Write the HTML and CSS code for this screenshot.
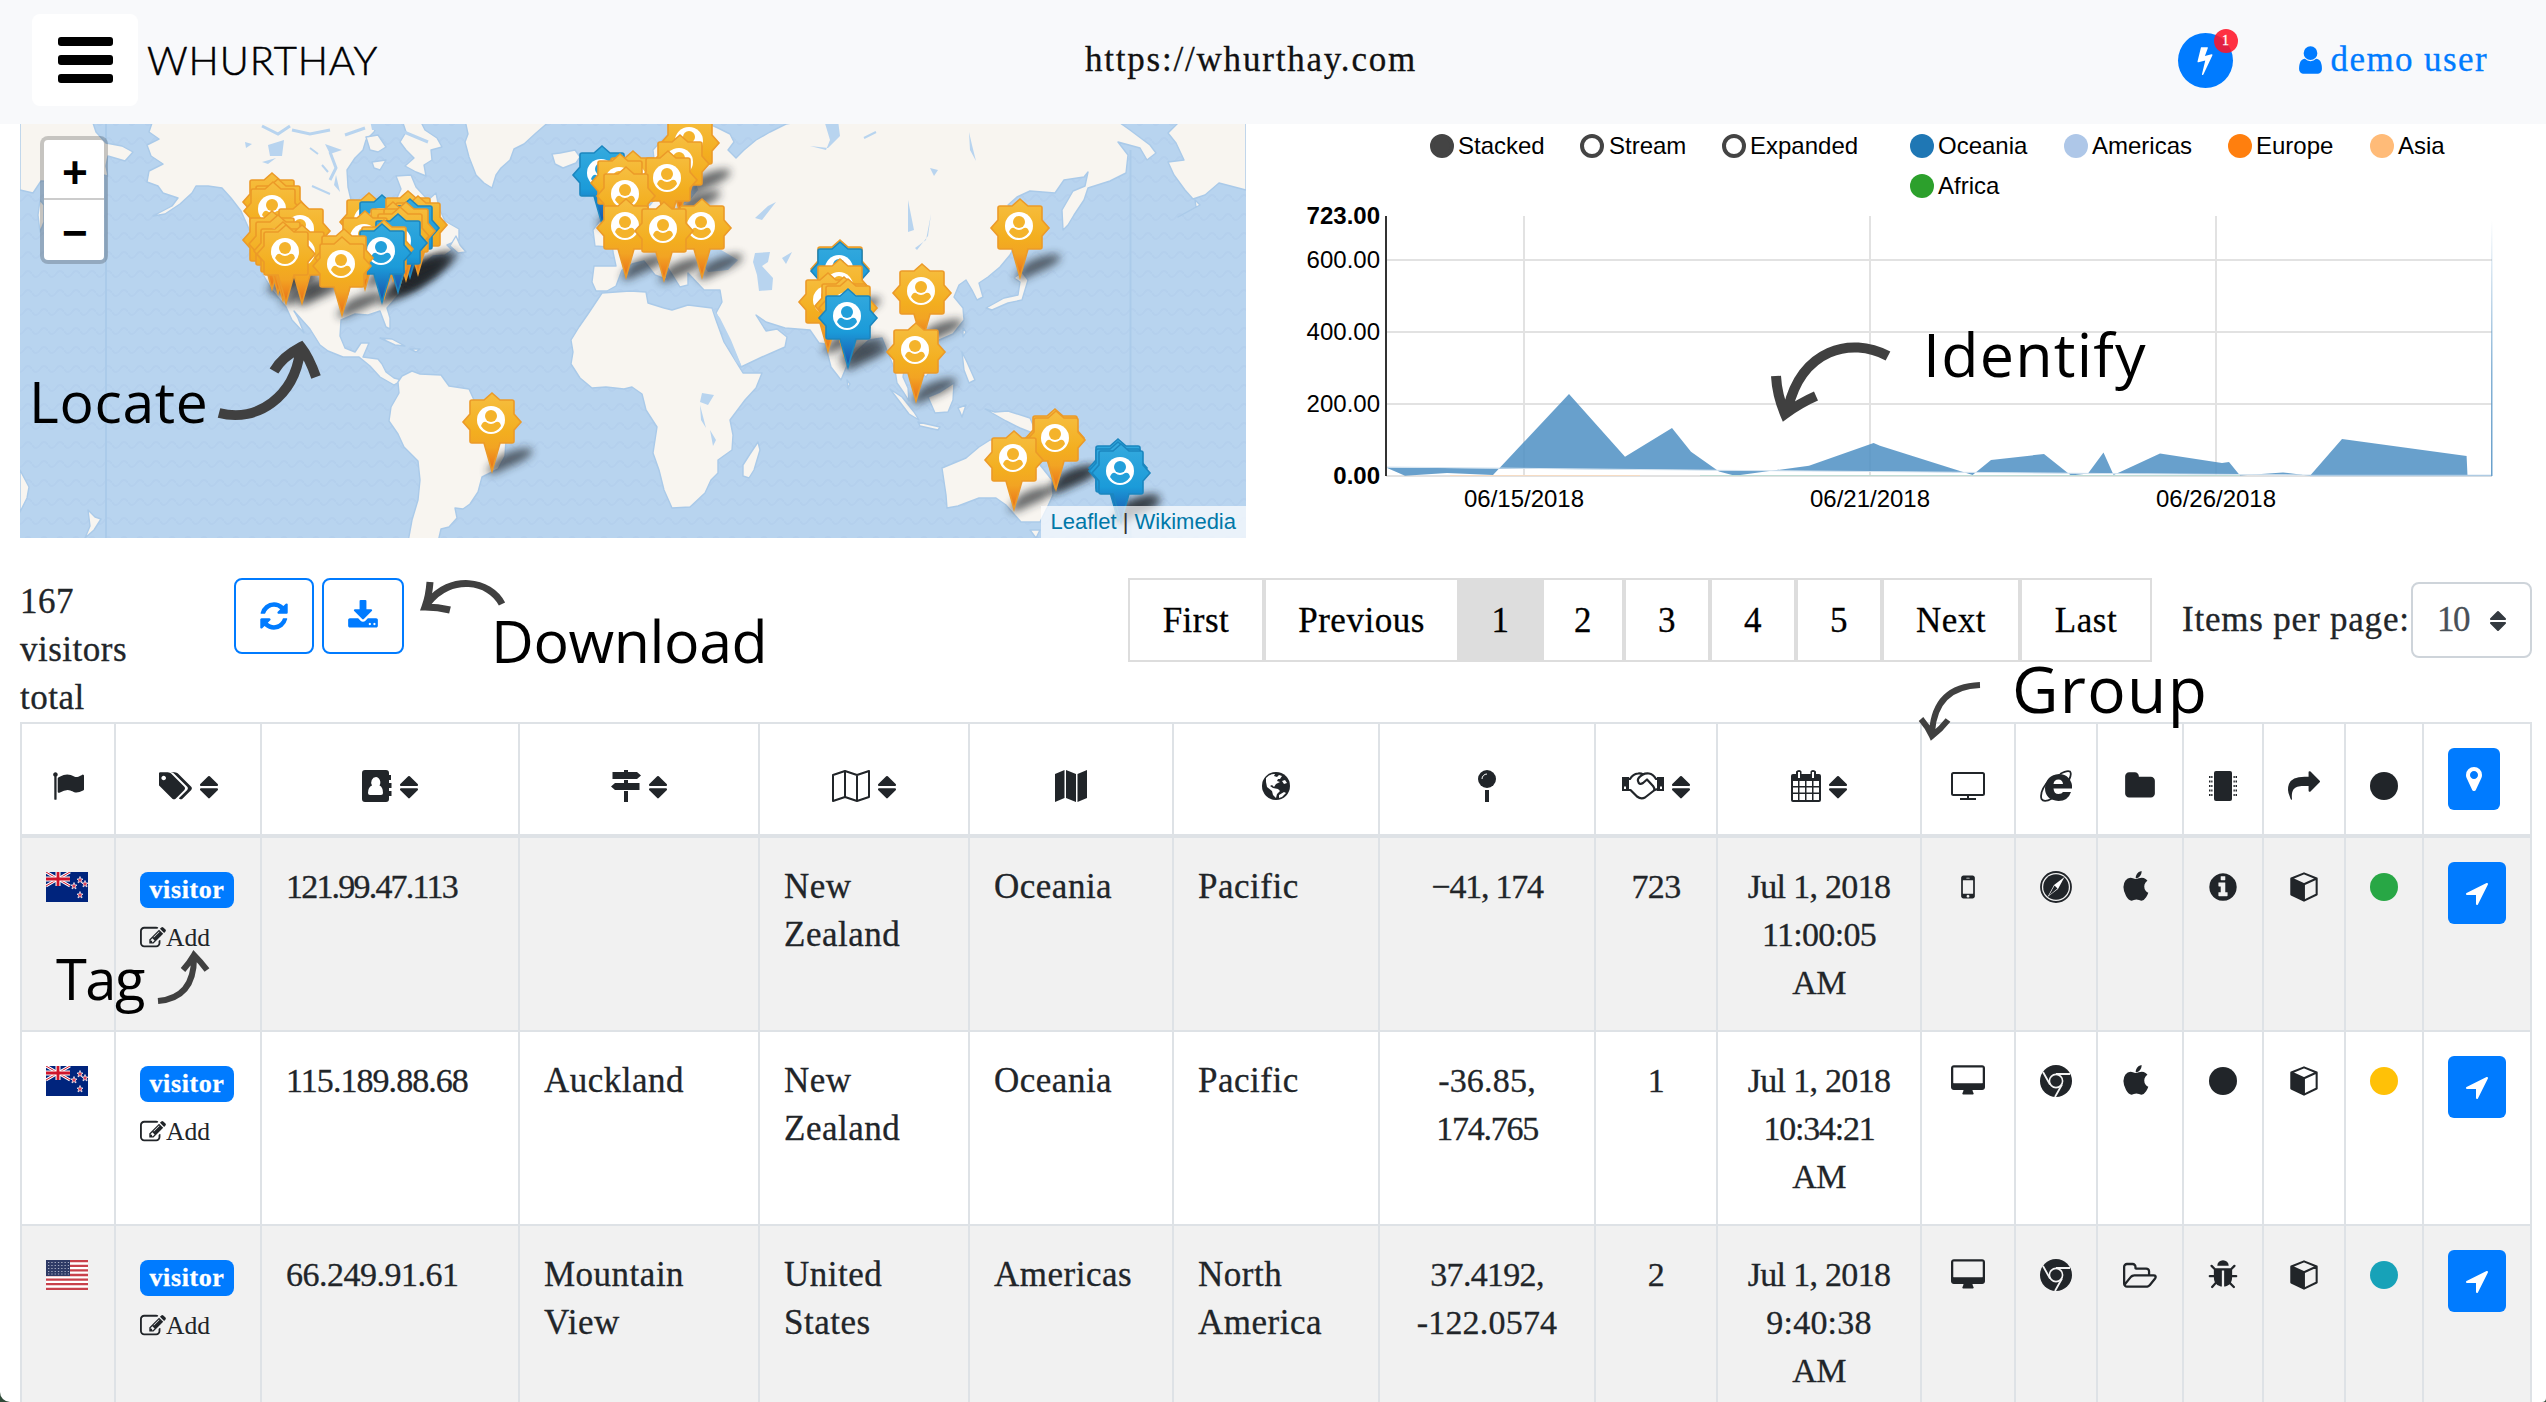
FILE: index.html
```html
<!DOCTYPE html>
<html lang="en">
<head>
<meta charset="utf-8">
<title>Whurthay</title>
<link rel="stylesheet" href="styles.css">
</head>
<body>
<svg class="defs" aria-hidden="true">
  <defs>
    <linearGradient id="gOrange" x1="0" y1="0" x2="0" y2="1"><stop offset="0" stop-color="#f6bf41"/><stop offset=".5" stop-color="#f3ae1f"/><stop offset=".7" stop-color="#f2a423"/><stop offset="1" stop-color="#ea6d17"/></linearGradient>
    <linearGradient id="gBlue" x1="0" y1="0" x2="0" y2="1"><stop offset="0" stop-color="#35aade"/><stop offset=".55" stop-color="#1b9bd9"/><stop offset="1" stop-color="#1a4ea8"/></linearGradient>
    <linearGradient id="gEdge" x1="0" y1="0" x2="0" y2="1"><stop offset="0" stop-color="#679fcb" stop-opacity="0"/><stop offset=".6" stop-color="#679fcb" stop-opacity=".8"/><stop offset="1" stop-color="#679fcb"/></linearGradient>
    <filter id="soft" x="-30%" y="-60%" width="160%" height="220%"><feGaussianBlur stdDeviation="4"/></filter>
    <pattern id="waves" width="16" height="19" patternUnits="userSpaceOnUse"><path d="M0 8Q4 14 8 8T16 8" fill="none" stroke="#b4d0ed" stroke-width="2"/></pattern>
    <path id="pinShape" d="M0-78L8-71H20Q22-71 22-69V-57L29-49L22-41V-30Q22-28 20-28H8L0 0L-8-28H-20Q-22-28-22-30V-41L-29-49L-22-57V-69Q-22-71-20-71H-8Z"/>
    <g id="face"><circle cx="-1" cy="-51" r="14" fill="#fff"/><circle cx="-1" cy="-55" r="6" fill="currentColor"/><path d="M-11-45Q-9-50-6-49Q-1-45 4-49Q8-50 9-45Q5-39-1-39T-11-45Z" fill="currentColor"/></g>
    <g id="o"><use href="#pinShape" fill="url(#gOrange)" stroke="#ec9a28" stroke-width="1.6"/><use href="#face" color="#f4b32b"/></g>
    <g id="b"><use href="#pinShape" fill="url(#gBlue)" stroke="#1b86bf" stroke-width="1.6"/><use href="#face" color="#229fda"/></g>
    <path id="sh" d="M-6 1L4-12Q16-22 38-23Q46-18 26-8Q10-1 2 3Z" filter="url(#soft)" opacity=".68"/>
  </defs>
  <symbol id="bolt" viewBox="0 0 1792 1792"><path d="M1333 566q18 20 7 44l-540 1157q-13 25-42 25-4 0-14-2-17-5-25.500-19t-4.500-30l197-808-406 101q-4 1-12 1-18 0-31-11-18-15-13-39l201-825q4-14 16-23t28-9h328q19 0 32 12.500t13 29.500q0 8-5 18l-171 463 396-98q8-2 12-2 19 0 34 15z"/></symbol>
  <symbol id="user" viewBox="256 0 1280 1792"><path d="M1536 1399q0 109-62.500 187t-150.500 78h-854q-88 0-150.500-78t-62.500-187q0-85 8.500-160.500t31.500-152 58.500-131 94-89 134.500-34.500q131 128 313 128t313-128q76 0 134.500 34.500t94 89 58.500 131 31.500 152 8.500 160.500zm-256-887q0 159-112.500 271.500t-271.500 112.500-271.500-112.500-112.500-271.500 112.500-271.500 271.500-112.500 271.500 112.500 112.500 271.500z"/></symbol>
  <symbol id="refresh" viewBox="0 0 1792 1792"><path d="M1639 1056q0 5-1 7-64 268-268 434.500t-478 166.500q-146 0-282.500-55t-243.500-157l-129 129q-19 19-45 19t-45-19-19-45v-448q0-26 19-45t45-19h448q26 0 45 19t19 45-19 45l-137 137q71 66 161 102t187 36q134 0 250-65t186-179q11-17 53-117 8-23 30-23h192q13 0 22.500 9.500t9.500 22.500zm25-800v448q0 26-19 45t-45 19h-448q-26 0-45-19t-19-45 19-45l138-138q-148-137-349-137-134 0-250 65t-186 179q-11 17-53 117-8 23-30 23h-199q-13 0-22.500-9.500t-9.500-22.500v-7q65-268 270-434.500t480-166.500q146 0 284 55.500t245 156.500l130-129q19-19 45-19t45 19 19 45z"/></symbol>
  <symbol id="download" viewBox="0 0 1792 1792"><path d="M1344 1344q0-26-19-45t-45-19-45 19-19 45 19 45 45 19 45-19 19-45zm256 0q0-26-19-45t-45-19-45 19-19 45 19 45 45 19 45-19 19-45zm128-224v320q0 40-28 68t-68 28h-1472q-40 0-68-28t-28-68v-320q0-40 28-68t68-28h465l135 136q58 56 136 56t136-56l136-136h464q40 0 68 28t28 68zm-325-569q17 41-14 70l-448 448q-18 19-45 19t-45-19l-448-448q-31-29-14-70 17-39 59-39h256v-448q0-26 19-45t45-19h256q26 0 45 19t19 45v448h256q42 0 59 39z"/></symbol>
  <symbol id="flag" viewBox="0 0 1792 1792"><path d="M320 256q0 72-64 110v1266q0 13-9.500 22.500t-22.500 9.500h-64q-13 0-22.500-9.500t-9.500-22.500v-1266q-64-38-64-110 0-53 37.500-90.500t90.500-37.500 90.500 37.500 37.500 90.500zm1472 64v763q0 25-12.500 38.500t-39.500 27.500q-215 116-369 116-61 0-123.500-22t-108.500-48-115.500-48-142.500-22q-192 0-464 146-17 9-33 9-26 0-45-19t-19-45v-742q0-32 31-55 21-14 79-43 236-120 421-120 107 0 200 29t219 88q38 19 88 19 54 0 117.500-21t110-47 88-47 54.500-21q26 0 45 19t19 45z"/></symbol>
  <symbol id="tags" viewBox="0 0 1835 1792"><path fill-rule="evenodd" d="M384 448q0-53-37.500-90.500t-90.500-37.500-90.500 37.500-37.500 90.500 37.500 90.500 90.500 37.500 90.500-37.500 37.500-90.500zm1067 576q0 53-37 90l-491 492q-39 37-91 37-53 0-90-37l-715-716q-38-37-64.500-101t-26.500-117v-416q0-52 38-90t90-38h416q53 0 117 26.500t102 64.500l715 714q37 39 37 91zm384 0q0 53-37 90l-491 492q-39 37-91 37-36 0-59-14t-53-45l470-470q37-37 37-90 0-52-37-91l-715-714q-38-38-102-64.500t-117-26.500h224q53 0 117 26.500t102 64.500l715 714q37 39 37 91z"/></symbol>
  <symbol id="sort" viewBox="384 0 1024 1792"><path d="M1408 1088q0 26-19 45l-448 448q-19 19-45 19t-45-19l-448-448q-19-19-19-45t19-45 45-19h896q26 0 45 19t19 45zm0-256q0 26-19 45t-45 19h-896q-26 0-45-19t-19-45 19-45l448-448q19-19 45-19t45 19l448 448q19 19 19 45z"/></symbol>
  <symbol id="book" viewBox="0 0 30 32"><path fill-rule="evenodd" d="M3 0H24Q27 0 27 3V5H29V10H27V13H29.500V18H27V21H29.500V26H27V29Q27 32 24 32H3Q0 32 0 29V3Q0 0 3 0ZM14 7A5 5.500 0 0 0 10 15.500Q6 17 6 23Q6 25 8 25H19Q21 25 21 23Q21 17 17.500 15.500A5 5.500 0 0 0 14 7Z"/></symbol>
  <symbol id="signs" viewBox="0 0 30 32"><path d="M13 0H17V2H26L30 5.500L26 9H1.500V2H13ZM13 10H17V13H28.500V20H4L0 16.500L4 13H13ZM13 21H17V32H13Z"/></symbol>
  <symbol id="mapo" viewBox="0 0 38 32"><path d="M1 5L13 1L25 5L37 1V27L25 31L13 27L1 31ZM13 1V27M25 5V31" fill="none" stroke="currentColor" stroke-width="2" stroke-linejoin="round"/></symbol>
  <symbol id="map" viewBox="0 0 32 32"><path d="M0 4L9.500 0V28L0 32ZM11 0L21 4V32L11 28ZM22.500 4L32 0V28L22.500 32Z"/></symbol>
  <symbol id="globe" viewBox="0 0 28 28"><circle cx="14" cy="14" r="14"/><path fill="#fff" d="M4 6Q8 1.500 13 2L12 4L15 5L17 3L20 4L18 7L16 7L15 9L18 10L14 12L12 15L10 13L8 14L11 16L16 17L18 19L15 22L14 26L11 23L10 19L5 15L4 10ZM17 23L22 20L24 21L20 25L17 26ZM20 9L23 8L25 11L22 12Z"/></symbol>
  <symbol id="pin" viewBox="0 0 18 32"><circle cx="9" cy="9" r="9"/><path d="M7 20H11V32H7Z"/><path d="M4 9A5 5 0 0 1 9 4" fill="none" stroke="#fff" stroke-width="1"/></symbol>
  <symbol id="shake" viewBox="0 0 42 28"><path d="M6 18H8.500L15 24.500Q19 27.500 23 25.500L32 18.500Q34 17 36 17.500M6 7H8Q11 2 16 1.500Q19 1 21 2.500Q23 1.200 27 1.500Q31 2 34 7H36M21 2.500Q15 6 16 9Q17 13.500 21 11L25 7.500L31 14Q33 16.500 32 18.500" fill="none" stroke="currentColor" stroke-width="2.200" stroke-linejoin="round"/><path fill-rule="evenodd" d="M0 5H7V19H0ZM2 14.500V17H4V14.500ZM35 5H42V19H35ZM38 14.500V17H40V14.500Z"/></symbol>
  <symbol id="cal" viewBox="0 0 30 32"><path fill-rule="evenodd" d="M2 4H5V1.500Q6 0 8 0T10.500 1.500V4H19.500V1.500Q20 0 22 0T25 1.500V4H28Q30 4 30 6V30Q30 32 28 32H2Q0 32 0 30V6Q0 4 2 4ZM2 11V16H7V11ZM8.500 11V16H14V11ZM15.500 11V16H21V11ZM22.500 11V16H28V11ZM2 17.500V22.500H7V17.500ZM8.500 17.500V22.500H14V17.500ZM15.500 17.500V22.500H21V17.500ZM22.500 17.500V22.500H28V17.500ZM2 24V30H7V24ZM8.500 24V30H14V24ZM15.500 24V30H21V24ZM22.500 24V30H28V24Z"/><path d="M8 2V8M22 2V8" stroke="#fff" stroke-width="2"/></symbol>
  <symbol id="tv" viewBox="0 0 34 28"><rect x="1" y="1" width="32" height="22" rx="1.500" fill="none" stroke="currentColor" stroke-width="2"/><path d="M16 23H18V26H25V28H9V26H16Z"/></symbol>
  <symbol id="ie" viewBox="0 0 32 32"><path d="M19 4A13 13 0 0 1 32 18.500H13.500Q14 24 18.500 24Q22 24 23 22H31Q28 31 18.500 31Q5 30 5 18Q6 5 19 4ZM13.500 14H23Q22.500 9.500 18.500 9.500Q14 9.500 13.500 14Z" fill-rule="evenodd"/><path d="M20 4Q27 0 30 1.500Q32 4 29 10M10 9Q-1 21 1.500 29Q4 33 12 28.500" fill="none" stroke="currentColor" stroke-width="1.800"/></symbol>
  <symbol id="folder" viewBox="0 0 1792 1792"><path d="M1728 608v704q0 92-66 158t-158 66h-1216q-92 0-158-66t-66-158v-960q0-92 66-158t158-66h320q92 0 158 66t66 158v32h672q92 0 158 66t66 158z"/></symbol>
  <symbol id="chip" viewBox="0 0 28 32"><rect x="5" y="1" width="18" height="30" rx="2"/><path d="M0 7H28M0 11.500H28M0 16H28M0 20.500H28M0 25H28" stroke="currentColor" stroke-width="2" stroke-dasharray="1.500 .700 1.300 21 1.300 .700 1.500"/></symbol>
  <symbol id="share" viewBox="0 0 1792 1792"><path d="M1792 640q0 26-19 45l-512 512q-19 19-45 19t-45-19-19-45v-256h-224q-98 0-175.500 6t-154 21.500-133 42.500-105.500 69.500-80 101-48.500 138.500-17.500 181q0 55 5 123 0 6 2.500 23.500t2.500 26.500q0 15-8.500 25t-23.500 10q-16 0-28-17-7-9-13-22t-13.500-30-10.500-24q-127-285-127-451 0-199 53-333 162-403 875-403h224v-256q0-26 19-45t45-19 45 19l512 512q19 19 19 45z"/></symbol>
  <symbol id="dot" viewBox="0 0 28 28"><circle cx="14" cy="14" r="14"/></symbol>
  <symbol id="marker" viewBox="0 0 1792 1792"><path fill-rule="evenodd" d="M1152 640q0-106-75-181t-181-75-181 75-75 181 75 181 181 75 181-75 75-181zm256 0q0 109-33 179l-364 774q-16 33-47.500 52t-67.500 19-67.500-19-46.500-52l-365-774q-33-70-33-179 0-212 150-362t362-150 362 150 150 362z"/></symbol>
  <symbol id="arrow" viewBox="0 0 1792 1792"><path d="M1593 349l-640 1280q-17 35-57 35-5 0-15-2-22-5-35.500-22.500t-13.500-39.500v-576h-576q-22 0-39.500-13.500t-22.500-35.500 4-42 29-30l1280-640q13-7 29-7 27 0 45 19 15 14 18.500 34.500t-6.500 39.500z"/></symbol>
  <symbol id="mobile" viewBox="512 0 768 1792"><path fill-rule="evenodd" d="M976 1408q0-33-23.500-56.500t-56.500-23.500-56.500 23.500-23.500 56.500 23.500 56.500 56.500 23.500 56.500-23.500 23.500-56.500zm208-160v-704q0-13-9.500-22.500t-22.500-9.500h-512q-13 0-22.500 9.500t-9.500 22.500v704q0 13 9.500 22.500t22.500 9.500h512q13 0 22.500-9.500t9.500-22.500zm-192-848q0-16-16-16h-160q-16 0-16 16t16 16h160q16 0 16-16zm288-16v1024q0 52-38 90t-90 38h-512q-52 0-90-38t-38-90v-1024q0-52 38-90t90-38h512q52 0 90 38t38 90z"/></symbol>
  <symbol id="safari" viewBox="0 0 32 32"><circle cx="16" cy="16" r="15" fill="none" stroke="currentColor" stroke-width="1.800"/><circle cx="16" cy="16" r="12.800"/><path d="M24.500 6L18 18L7.500 26L14 14Z" fill="#fff"/><path d="M14.500 14.500L17.500 17.500L9 24.500Z" fill="#212529"/></symbol>
  <symbol id="apple" viewBox="0 0 1792 1792"><path d="M1585 1215q-39 125-123 250-129 196-257 196-49 0-140-32-86-32-151-32-61 0-142 33-81 34-132 34-152 0-301-259-147-261-147-503 0-228 113-374 113-144 284-144 72 0 177 30 104 30 138 30 45 0 143-34 102-34 173-34 119 0 213 65 52 36 104 100-79 67-114 118-65 94-65 207 0 124 69 223t158 126zm-376-1173q0 61-29 136-30 75-93 138-54 54-108 72-37 11-104 17 3-149 78-257 74-107 250-148 1 3 2.500 11t2.500 11q0 4 .500 10t.500 10z"/></symbol>
  <symbol id="info" viewBox="0 0 1792 1792"><path fill-rule="evenodd" d="M1152 1376v-160q0-14-9-23t-23-9h-96v-512q0-14-9-23t-23-9h-320q-14 0-23 9t-9 23v160q0 14 9 23t23 9h96v320h-96q-14 0-23 9t-9 23v160q0 14 9 23t23 9h448q14 0 23-9t9-23zm-128-896v-160q0-14-9-23t-23-9h-192q-14 0-23 9t-9 23v160q0 14 9 23t23 9h192q14 0 23-9t9-23zm640 416q0 209-103 385.500t-279.500 279.500-385.500 103-385.500-103-279.500-279.500-103-385.500 103-385.500 279.500-279.500 385.500-103 385.500 103 279.500 279.500 103 385.500z"/></symbol>
  <symbol id="cube" viewBox="0 0 30 32"><path d="M15 1.500L28.500 7V24L15 30.500L1.500 24V7ZM1.500 7L15 13L28.500 7" fill="none" stroke="currentColor" stroke-width="2.200" stroke-linejoin="round"/><path d="M1 7L16 13V31L1 24Z"/></symbol>
  <symbol id="desktop" viewBox="-64 0 1920 1792"><path fill-rule="evenodd" d="M1728 992v-832q0-13-9.500-22.500t-22.500-9.500h-1600q-13 0-22.500 9.500t-9.500 22.500v832q0 13 9.500 22.500t22.500 9.500h1600q13 0 22.500-9.500t9.500-22.500zm128-832v1088q0 66-47 113t-113 47h-544q0 37 16 77.500t32 71 16 43.500q0 26-19 45t-45 19h-512q-26 0-45-19t-19-45q0-14 16-44t32-70 16-78h-544q-66 0-113-47t-47-113v-1088q0-66 47-113t113-47h1600q66 0 113 47t47 113z"/></symbol>
  <symbol id="chrome" viewBox="0 0 32 32"><circle cx="16" cy="16" r="16"/><circle cx="16" cy="16" r="6.600" fill="none" stroke="#f4f4f4" stroke-width="1.600"/><path d="M16 9H30M22 19.500L15 32M10 19.500L3 7" fill="none" stroke="#f4f4f4" stroke-width="1.800"/></symbol>
  <symbol id="open" viewBox="0 0 1920 1792"><path fill-rule="evenodd" d="M1781 1013q0-31-53-31h-1088q-40 0-85.500 21.500t-71.500 52.500l-294 363q-18 24-18 40 0 31 53 31h1088q40 0 86-22t71-53l294-363q18-22 18-39zm-1141-159h768v-160q0-40-28-68t-68-28h-576q-40 0-68-28t-28-68v-64q0-40-28-68t-68-28h-320q-40 0-68 28t-28 68v853l256-315q44-53 116-87.500t140-34.500zm1269 159q0 62-46 120l-295 363q-43 53-116 87.500t-140 34.500h-1088q-92 0-158-66t-66-158v-960q0-92 66-158t158-66h320q92 0 158 66t66 158v32h544q92 0 158 66t66 158v160h192q54 0 99 24.500t67 70.500q15 32 15 68z"/></symbol>
  <symbol id="bug" viewBox="0 0 1792 1792"><path d="M1696 960q0 26-19 45t-45 19h-224q0 171-67 290l208 209q19 19 19 45t-19 45q-18 19-45 19t-45-19l-198-197q-5 5-15 13t-42 28.500-65 36.500-82 29-97 13v-896h-128v896q-51 0-101.500-13.500t-87-33-66-39-43.500-32.500l-15-14-183 207q-20 21-48 21-24 0-43-16-19-18-20.500-44.500t15.500-46.500l202-227q-58-114-58-274h-224q-26 0-45-19t-19-45 19-45 45-19h224v-294l-173-173q-19-19-19-45t19-45 45-19 45 19l173 173h844l173-173q19-19 45-19t45 19 19 45-19 45l-173 173v294h224q26 0 45 19t19 45zm-480-576h-640q0-133 93.500-226.500t226.500-93.500 226.500 93.500 93.500 226.500z"/></symbol>
  <symbol id="edit" viewBox="0 0 1792 1792"><path fill-rule="evenodd" d="M888 1184l116-116-152-152-116 116v56h96v96h56zm440-720q-16-16-33 1l-350 350q-17 17-1 33t33-1l350-350q17-17 1-33zm80 594v190q0 119-84.500 203.500t-203.500 84.500h-832q-119 0-203.500-84.500t-84.500-203.500v-832q0-119 84.500-203.500t203.500-84.500h832q63 0 117 25 15 7 18 23 3 17-9 29l-49 49q-14 14-32 8-23-6-45-6h-832q-66 0-113 47t-47 113v832q0 66 47 113t113 47h832q66 0 113-47t47-113v-126q0-13 9-22l64-64q15-15 35-7t20 29zm-96-738l288 288-672 672h-288v-288zm444 132l-92 92-288-288 92-92q28-28 68-28t68 28l152 152q28 28 28 68t-28 68z"/></symbol>
  <symbol id="nz" viewBox="0 0 42 30"><path fill="#00247d" d="M0 0H42V30H0Z"/><path d="M0 0L24 14M24 0L0 14" stroke="#fff" stroke-width="3"/><path d="M0 0L24 14M24 0L0 14" stroke="#cf142b" stroke-width="1"/><path d="M12 0V14M0 7H24" stroke="#fff" stroke-width="5"/><path d="M12 0V14M0 7H24" stroke="#cf142b" stroke-width="2.800"/><g fill="#d8445a" stroke="#fff" stroke-width=".700"><path id="st" d="M34 4.500L35 7H37L35.500 8.500L36 11L34 9.500L32 11L32.500 8.500L31 7H33Z"/><use href="#st" x="-6" y="6"/><use href="#st" x="5" y="4"/><use href="#st" y="15"/></g></symbol>
  <symbol id="us" viewBox="0 0 42 30"><path fill="#fff" d="M0 0H42V30H0Z"/><path d="M0 1.200H42M0 5.800H42M0 10.400H42M0 15H42M0 19.600H42M0 24.200H42M0 28.800H42" stroke="#c8414b" stroke-width="2.300"/><path fill="#2f3b66" d="M0 0H24V16H0Z"/><path d="M2 2.500H23M2 5.500H23M2 8.500H23M2 11.500H23M2 14H23" stroke="#a9aec4" stroke-width="1.200" stroke-dasharray="1.300 2"/></symbol>
</svg>

<div class="app">
  <header class="top">
    <div class="brand">
      <button class="menu" aria-label="Menu"><i></i><i></i><i></i></button>
      <span class="logo">WHURTHAY</span>
    </div>
    <div class="site">https://whurthay.com</div>
    <div class="account">
      <div class="alert"><svg width="30" height="30"><use href="#bolt"/></svg><span class="count">1</span></div>
      <a class="me"><svg width="23" height="32"><use href="#user"/></svg><span>demo user</span></a>
    </div>
  </header>

  <section class="panels">
    <div class="map">
      <svg class="world" viewBox="20 124 1226 414" width="1226" height="414">
        <path fill="#b8d4ef" d="M20 124H1246V538H20Z"/><path fill="url(#waves)" d="M20 124H1246V538H20Z"/>
        <path d="M106 124V538M1130.500 150V538" stroke="#abcbea" stroke-width="2"/>
        <g fill="#f8f5f0" stroke="#aacae9" stroke-width="1.400" stroke-linejoin="round">
          <path d="M20 120H92L96 132L106 143L122 146L133 152L125 161L108 156L106 166L108 176L98 174L90 180L60 182L41 181L33 193L20 190Z"/><path d="M40 200L44 205V222L40 232L38 215Z"/>
          <path d="M153 120L149 132L159 139L147 145L151 156L163 164L149 171L147 182L158 186L163 193L178 198L172 206L153 216L165 214L180 204L192 193L196 186L208 186L222 188L231 198L241 211L249 229L256 250L261 271L272 290L286 307L292 320L304 333L298 318L294 311L310 329L320 345L328 351L343 357L359 357L370 366L380 377L394 385L402 380L394 378L386 372L382 364L378 359L363 357L369 343L361 343L355 352L345 348L340 336L341 320L355 314L368 315L380 311L386 327L390 329L390 318L387 308L394 300L412 279L420 268L433 256L445 255L452 250L447 245L459 240L459 229L445 221L439 208L436 193L428 200L416 187L411 175L396 176L401 189L396 200L385 212L372 205L351 200L348 187L347 170L355 158L363 150L366 140L374 132L380 120Z"/>
          <path d="M402 120L406 132L400 142L406 150L414 158L405 166L416 172L426 176L424 165L432 160L431 150L442 147L437 138L425 130L420 120ZM372 162L386 160L380 170L374 168ZM366 137L378 135L386 147L378 152L370 150ZM450 246L456 236L460 245L466 252L458 253Z"/>
          <path d="M465 120L468 134L465 142L469 157L476 175L484 183L492 188L496 175L501 168L510 160L514 149L524 144L536 133L551 120Z"/>
          <path d="M552 154L560 153L575 150L580 157L576 163L563 168L555 164Z"/>
          <path d="M402 376L412 371L420 374L441 375L449 386L469 389L474 400L494 411L512 416L518 423L514 432L506 439L505 456L498 469L482 477L478 492L470 504L463 509L455 508L457 518L449 527L441 529L438 542H408L412 520L418 500L420 480L418 461L404 447L398 434L389 421L391 407L399 393L398 382Z"/>
          <path d="M380 338L392 339L405 346L395 345ZM410 349L420 349L416 352Z"/>
          <path d="M20 470L29 487L27 498L20 512ZM88 510L95 517L101 519L94 530L85 538L90 526Z"/>
          <path d="M602 293L588 314L579 327L571 340L573 352L571 364L580 378L592 388L606 387L624 389L632 387L642 394L646 410L657 427L653 453L659 470L664 490L672 508L690 507L705 493L711 480L718 473L718 460L732 450L733 435L730 420L745 400L756 388L762 373L743 373L735 360L724 342L716 320L712 308L688 305L672 310L664 308L648 303L646 292L630 291Z"/>
          <path d="M810 120L786 124L770 132L756 140L744 150L736 158L728 150L734 142L730 134L718 128L700 120L680 124L662 140L653 150L655 168L664 172L662 190L650 205L640 212L630 232L612 240L613 252L616 266L594 266L592 282L596 291L607 291L616 286L622 270L632 264L644 261L655 275L668 280L658 262L668 268L680 287L688 285L688 273L704 290L720 290L722 302L716 313L727 335L741 367L762 357L785 347L787 337L777 329L766 331L756 315L766 322L785 328L810 330L819 343L825 344L831 367L841 380L848 363L858 350L869 340L882 338L888 353L895 370L897 383L904 393L909 401L908 388L903 377L904 370L918 370L926 377L932 367L926 350L937 341L953 334L964 320L963 308L954 297L959 285L966 280L972 290L977 300L983 297L979 283L988 277L1000 267L1010 255L1019 238L1020 210L1008 205L1017 197L1030 191L1055 193L1064 180L1084 177L1088 172L1085 186L1073 191L1062 210L1063 230L1068 225L1074 215L1084 200L1088 188L1110 181L1126 173L1128 155L1118 142L1140 148L1147 160L1156 153L1150 145L1130 130L1116 120Z"/>
          <path d="M593 230L602 218L614 226L618 241L608 247L595 246Z"/>
          <path d="M1181 120L1168 133L1176 143L1184 160L1168 162L1174 175L1185 190L1193 199L1205 195L1219 183L1246 190V120ZM1195 200L1200 205L1178 217L1196 207Z"/>
          <path d="M986 308L1004 298L1018 295L1020 282L1014 278L1022 272L1028 280L1022 300L1008 303L992 310Z"/><path d="M890 389L902 397L914 412L919 420L909 414ZM918 422L940 427L938 430L920 426ZM928 397L940 392L954 383L953 400L948 412L935 413ZM958 408L966 405L962 417L960 412ZM962 352L967 362L975 380L969 383L964 370ZM985 409L995 412L1008 411L1030 418L1034 427L1046 438L1030 432L1020 428L1006 421ZM847 380L850 384L848 388ZM963 328L966 332L963 337Z"/>
          <path d="M942 468L966 458L979 447L990 440L1002 440L1004 450L1020 456L1026 436L1034 450L1040 465L1052 480L1053 495L1047 508L1040 522L1021 522L1006 505L996 498L979 498L958 506L947 508L946 495Z"/><path d="M1030 530L1040 530L1036 538Z"/>
          <path d="M758 442L760 450L754 470L749 478L743 476L743 465L750 454Z"/>
        </g>
        <g fill="#b8d4ef">
          <path d="M702 250L718 248L738 260L728 270L708 272L702 263ZM755 253L770 252L768 262L762 266L773 278L772 290L759 291L757 275L753 262ZM712 308L720 318L731 340L742 367L736 362L724 336ZM692 168L698 190L690 200L680 206L684 190ZM824 120L830 140L826 150L810 146L828 148L840 136L838 120ZM969 132L972 145L976 161L970 150ZM915 248L926 240L931 214L928 236L917 250ZM908 200L914 230L908 232ZM702 393L714 395L708 405L700 402ZM700 405L706 428L701 420ZM710 430L716 440L713 446ZM268 145L284 140L282 156L270 156ZM262 162L276 158L268 164ZM245 142L252 144L246 148ZM325 144L342 150L330 154ZM336 175L340 192L334 185ZM930 168L938 170L934 176ZM370 120L384 120L380 130L372 130ZM755 218L768 206L776 202L762 220ZM782 258L792 252L786 264Z"/>
        </g>
        <g fill="none" stroke="#b8d4ef" stroke-width="3"><path d="M262 126L278 134L290 126M292 130L310 134L330 130M330 152L336 168L330 180M345 135L365 128M385 130L398 124M404 132L428 142"/><path stroke-width="2" d="M310 148L318 154M322 165L328 172M312 186L330 194M864 138L876 132"/></g>
        <g>
          <g><use href="#sh" x="272" y="290"/><use href="#sh" x="279" y="294"/><use href="#sh" x="286" y="303"/><use href="#sh" x="302" y="303"/><use href="#sh" x="342" y="315"/><use href="#sh" x="369" y="285"/><use href="#sh" x="382" y="302"/><use href="#sh" x="398" y="292"/><use href="#sh" x="400" y="287"/><use href="#sh" x="410" y="277"/><use href="#sh" x="418" y="274"/><use href="#sh" x="390" y="296"/><use href="#sh" x="405" y="283"/><use href="#sh" x="410" y="281"/><use href="#sh" x="492" y="471"/><use href="#sh" x="602" y="224"/><use href="#sh" x="690" y="192"/><use href="#sh" x="680" y="213"/><use href="#sh" x="626" y="277"/><use href="#sh" x="664" y="280"/><use href="#sh" x="702" y="277"/><use href="#sh" x="840" y="320"/><use href="#sh" x="848" y="367"/><use href="#sh" x="844" y="360"/><use href="#sh" x="828" y="351"/><use href="#sh" x="922" y="342"/><use href="#sh" x="916" y="401"/><use href="#sh" x="1020" y="277"/><use href="#sh" x="1056" y="489"/><use href="#sh" x="1056" y="489"/><use href="#sh" x="1014" y="509"/><use href="#sh" x="1118" y="517"/><use href="#sh" x="1120" y="520"/></g>
          <use href="#o" x="272" y="251"/><use href="#o" x="278" y="257"/><use href="#o" x="273" y="260"/><use href="#o" x="301" y="280"/><use href="#o" x="272" y="289"/><use href="#o" x="278" y="293"/><use href="#o" x="283" y="300"/><use href="#o" x="302" y="303"/><use href="#o" x="286" y="303"/>
          <use href="#o" x="369" y="271"/><use href="#b" x="382" y="273"/><use href="#o" x="408" y="269"/><use href="#o" x="418" y="274"/><use href="#b" x="410" y="277"/><use href="#o" x="393" y="280"/><use href="#o" x="406" y="280"/><use href="#o" x="400" y="285"/><use href="#o" x="365" y="289"/><use href="#b" x="398" y="292"/><use href="#o" x="384" y="298"/><use href="#b" x="382" y="302"/><use href="#o" x="344" y="307"/><use href="#o" x="342" y="315"/>
          <use href="#o" x="492" y="471"/>
          <use href="#o" x="690" y="192"/><use href="#o" x="680" y="213"/><use href="#b" x="602" y="224"/><use href="#o" x="633" y="229"/><use href="#o" x="620" y="232"/><use href="#o" x="668" y="229"/><use href="#o" x="626" y="245"/><use href="#o" x="702" y="277"/><use href="#o" x="626" y="277"/><use href="#o" x="664" y="280"/>
          <use href="#o" x="840" y="318"/><use href="#b" x="840" y="320"/><use href="#o" x="840" y="337"/><use href="#o" x="828" y="351"/><use href="#o" x="844" y="355"/><use href="#o" x="848" y="357"/><use href="#b" x="848" y="367"/>
          <use href="#o" x="922" y="342"/><use href="#o" x="916" y="401"/><use href="#o" x="1020" y="277"/>
          <use href="#o" x="1055" y="487"/><use href="#o" x="1056" y="489"/><use href="#o" x="1014" y="509"/>
          <use href="#b" x="1118" y="517"/><use href="#b" x="1118" y="520"/><use href="#b" x="1121" y="522"/>
        </g>
      </svg>
      <div class="zoom"><span>+</span><span>−</span></div>
      <div class="credit"><a>Leaflet</a> | <a>Wikimedia</a></div>
    </div>
    <svg class="chart" viewBox="1286 124 1260 414" width="1260" height="414">
      <g fill="#444" stroke="#444" stroke-width="4"><circle cx="1442" cy="146" r="10"/><circle cx="1592" cy="146" r="10" fill="#fff"/><circle cx="1734" cy="146" r="10" fill="#fff"/></g>
      <circle cx="1922" cy="146" r="12" fill="#1f77b4"/><circle cx="2076" cy="146" r="12" fill="#aec7e8"/><circle cx="2240" cy="146" r="12" fill="#ff7f0e"/><circle cx="2382" cy="146" r="12" fill="#ffbb78"/><circle cx="1922" cy="186" r="12" fill="#2ca02c"/>
      <g><text x="1458" y="154">Stacked</text><text x="1609" y="154">Stream</text><text x="1750" y="154">Expanded</text><text x="1938" y="154">Oceania</text><text x="2092" y="154">Americas</text><text x="2256" y="154">Europe</text><text x="2398" y="154">Asia</text><text x="1938" y="194">Africa</text></g>
      <path d="M1386 260H2492M1386 332H2492M1386 404H2492M1386 476H2492M1524 216V476M1870 216V476M2216 216V476" stroke="#e2e2e2" stroke-width="2"/>
      <path fill="#4d8fc3" fill-opacity=".85" d="M1386 467.500L1405 475.700L1447 473L1493 475L1569 394L1625 456.700L1672 428L1691 451.700L1719 471.500L1735 475.700L1809 465.700L1873.600 443L1880 445.700L1972.600 475L1991 460L2044 454L2071 475.400L2088 473.600L2103.500 452.500L2113.600 475L2160 453.600L2222 463L2229 462L2240 475.400L2283 472.500L2310 475.700L2342 439L2466.600 456L2467.500 475.700L2310 475L2113 473.600L1870 471.500L1719 470.300Z"/>
      <path d="M1386 467L1719 470.300L1870 471.500L2113 473.600L2310 475" fill="none" stroke="#d5e4f0" stroke-width="1"/>
      <path d="M1450 475.500H1640" stroke="#f6dcc4" stroke-width="1"/><path d="M1700 475.500H2240" stroke="#bfdcd4" stroke-width="1"/><path d="M2310 475.500H2492" stroke="#aecbe3" stroke-width="1.500"/>
      <path d="M2491 220H2492.500V476H2491Z" fill="url(#gEdge)"/>
      <path d="M1386 216V476" stroke="#333" stroke-width="2"/>
      <g text-anchor="end"><text class="edge" x="1380" y="224">723.00</text><text x="1380" y="268">600.00</text><text x="1380" y="340">400.00</text><text x="1380" y="412">200.00</text><text class="edge" x="1380" y="484">0.00</text></g>
      <g text-anchor="middle"><text x="1524" y="507">06/15/2018</text><text x="1870" y="507">06/21/2018</text><text x="2216" y="507">06/26/2018</text></g>
    </svg>
  </section>

  <section class="tools">
    <p class="total">167 visitors total</p>
    <div class="actions">
      <button class="outline" aria-label="Refresh"><svg width="32" height="32"><use href="#refresh"/></svg></button>
      <button class="outline wide" aria-label="Download"><svg width="32" height="32"><use href="#download"/></svg></button>
    </div>
    <nav class="pages"><a class="first">First</a><a class="prev">Previous</a><a class="on">1</a><a class="two">2</a><a class="n">3</a><a class="n">4</a><a class="n">5</a><a class="next">Next</a><a class="last">Last</a></nav>
    <div class="perpage"><span>Items per page:</span><div class="select"><span>10</span><svg width="16" height="28"><use href="#sort"/></svg></div></div>
  </section>

  <table class="visitors">
    <colgroup><col class="c1"><col class="c2"><col class="c3"><col class="c4"><col class="c5"><col class="c6"><col class="c7"><col class="c8"><col class="c9"><col class="c10"><col class="c11"><col class="c12"><col class="c13"><col class="c14"><col class="c15"><col class="c16"><col class="c17"></colgroup>
    <thead><tr>
      <th><div class="ic"><svg width="32" height="32"><use href="#flag"/></svg></div></th>
      <th><div class="ic"><svg width="33" height="32"><use href="#tags"/></svg><svg class="sort"><use href="#sort"/></svg></div></th>
      <th><div class="ic"><svg width="30" height="32"><use href="#book"/></svg><svg class="sort"><use href="#sort"/></svg></div></th>
      <th><div class="ic"><svg width="30" height="32"><use href="#signs"/></svg><svg class="sort"><use href="#sort"/></svg></div></th>
      <th><div class="ic"><svg width="38" height="32"><use href="#mapo"/></svg><svg class="sort"><use href="#sort"/></svg></div></th>
      <th><div class="ic"><svg width="32" height="32"><use href="#map"/></svg></div></th>
      <th><div class="ic"><svg width="28" height="28"><use href="#globe"/></svg></div></th>
      <th><div class="ic"><svg width="18" height="32"><use href="#pin"/></svg></div></th>
      <th><div class="ic"><svg width="42" height="28"><use href="#shake"/></svg><svg class="sort"><use href="#sort"/></svg></div></th>
      <th><div class="ic"><svg width="30" height="32"><use href="#cal"/></svg><svg class="sort"><use href="#sort"/></svg></div></th>
      <th><div class="ic"><svg width="34" height="28"><use href="#tv"/></svg></div></th>
      <th><div class="ic"><svg width="32" height="32"><use href="#ie"/></svg></div></th>
      <th><div class="ic"><svg width="32" height="32"><use href="#folder"/></svg></div></th>
      <th><div class="ic"><svg width="28" height="32"><use href="#chip"/></svg></div></th>
      <th><div class="ic"><svg width="32" height="32"><use href="#share"/></svg></div></th>
      <th><div class="ic"><svg width="28" height="28"><use href="#dot"/></svg></div></th>
      <th class="act"><button class="go small" aria-label="Show all"><svg width="28" height="28"><use href="#marker"/></svg></button></th>
    </tr></thead>
    <tbody>
      <tr>
        <td><svg class="country" width="42" height="30"><use href="#nz"/></svg></td>
        <td><span class="tag">visitor</span><span class="add"><svg width="26" height="26"><use href="#edit"/></svg>Add</span></td>
        <td class="num xtight">121.99.47.113</td><td></td><td>New Zealand</td><td>Oceania</td><td>Pacific</td>
        <td class="num mid">−<span class="tight">41, 174</span></td><td class="num mid">723</td><td class="num mid">Jul 1, 2018<br>11:00:05<br>AM</td>
        <td><div class="ic"><svg width="14" height="32"><use href="#mobile"/></svg></div></td>
        <td><div class="ic"><svg width="32" height="32"><use href="#safari"/></svg></div></td>
        <td><div class="ic apple"><svg width="32" height="32"><use href="#apple"/></svg></div></td>
        <td><div class="ic"><svg width="32" height="32"><use href="#info"/></svg></div></td>
        <td><div class="ic"><svg width="30" height="30"><use href="#cube"/></svg></div></td>
        <td><div class="ic green"><svg width="28" height="28"><use href="#dot"/></svg></div></td>
        <td class="act"><button class="go" aria-label="Locate"><svg width="28" height="28"><use href="#arrow"/></svg></button></td>
      </tr>
      <tr>
        <td><svg class="country" width="42" height="30"><use href="#nz"/></svg></td>
        <td><span class="tag">visitor</span><span class="add"><svg width="26" height="26"><use href="#edit"/></svg>Add</span></td>
        <td class="num ip2">115.189.88.68</td><td>Auckland</td><td>New Zealand</td><td>Oceania</td><td>Pacific</td>
        <td class="num mid"><span class="plain">-36.85,</span> <span class="tight">174.765</span></td><td class="num mid">1</td><td class="num mid">Jul 1, 2018<br><span class="tight">10:34:21</span><br>AM</td>
        <td><div class="ic"><svg width="34" height="32"><use href="#desktop"/></svg></div></td>
        <td><div class="ic"><svg width="32" height="32"><use href="#chrome"/></svg></div></td>
        <td><div class="ic apple"><svg width="32" height="32"><use href="#apple"/></svg></div></td>
        <td><div class="ic"><svg width="28" height="28"><use href="#dot"/></svg></div></td>
        <td><div class="ic"><svg width="30" height="30"><use href="#cube"/></svg></div></td>
        <td><div class="ic yellow"><svg width="28" height="28"><use href="#dot"/></svg></div></td>
        <td class="act"><button class="go" aria-label="Locate"><svg width="28" height="28"><use href="#arrow"/></svg></button></td>
      </tr>
      <tr>
        <td><svg class="country" width="42" height="30"><use href="#us"/></svg></td>
        <td><span class="tag">visitor</span><span class="add"><svg width="26" height="26"><use href="#edit"/></svg>Add</span></td>
        <td class="num ip3">66.249.91.61</td><td>Mountain View</td><td>United States</td><td>Americas</td><td>North America</td>
        <td class="num mid">37.4192,<br><span class="plain">-122.0574</span></td><td class="num mid">2</td><td class="num mid">Jul 1, 2018<br><span class="plain">9:40:38</span><br>AM</td>
        <td><div class="ic"><svg width="34" height="32"><use href="#desktop"/></svg></div></td>
        <td><div class="ic"><svg width="32" height="32"><use href="#chrome"/></svg></div></td>
        <td><div class="ic"><svg width="34" height="32"><use href="#open"/></svg></div></td>
        <td><div class="ic"><svg width="32" height="32"><use href="#bug"/></svg></div></td>
        <td><div class="ic"><svg width="30" height="30"><use href="#cube"/></svg></div></td>
        <td><div class="ic teal"><svg width="28" height="28"><use href="#dot"/></svg></div></td>
        <td class="act"><button class="go" aria-label="Locate"><svg width="28" height="28"><use href="#arrow"/></svg></button></td>
      </tr>
    </tbody>
  </table>

  <svg class="notes" viewBox="0 0 2546 1402" width="2546" height="1402">
    <g fill="none" stroke="#404040" stroke-linejoin="miter">
      <path stroke-width="10" d="M219 413C258 423 294 396 300 352M274 371Q282 357 301 347Q309 357 316 377"/>
      <path stroke-width="10" d="M1888 356C1850 336 1802 350 1788 408M1776 376Q1777 395 1785 414Q1800 403 1816 396"/>
      <path stroke-width="7" d="M502 604C490 580 450 574 428 603M430 582Q429 596 425 607Q438 607 450 610"/>
      <path stroke-width="6" d="M158 1001C182 999 194 985 194 958M183 970Q190 962 194 955Q201 962 207 970"/>
      <path stroke-width="6" d="M1980 685C1950 686 1934 702 1932 732M1921 719Q1928 727 1932 736Q1941 729 1948 720"/>
    </g>
    <g fill="#000">
      <text class="n-locate" x="29" y="423">Locate</text>
      <text class="n-identify" x="1923" y="377">Identify</text>
      <text class="n-download" x="491" y="663">Download</text>
      <text class="n-group" x="2012" y="713">Group</text>
      <text class="n-tag" x="56" y="1000">Tag</text>
    </g>
  </svg>
</div>
</body>
</html>
```
FILE: styles.css
```css
* { box-sizing: border-box; }
html { background: #2f4a38; }
body {
  margin: 0;
  width: 2546px;
  height: 1402px;
  overflow: hidden;
  font: 35px/48px "Liberation Serif", serif;
  letter-spacing: .5px;
  color: #212529;
}
svg { fill: currentColor; display: block; flex: none; }
button { font: inherit; padding: 0; cursor: pointer; }
.defs { position: absolute; width: 0; height: 0; }
.app {
  position: relative;
  height: 1402px;
  overflow: hidden;
  background: #fff;
  border-radius: 0 0 4px 10px;
}

/* header */
.top {
  display: grid;
  grid-template-columns: 1fr auto 1fr;
  align-items: center;
  height: 124px;
  padding: 0 58px 4px 32px;
  background: #f8f9fb;
  -webkit-text-stroke: .3px;
}
.brand { display: flex; align-items: center; gap: 9px; }
.menu {
  display: flex;
  flex-direction: column;
  justify-content: center;
  align-items: center;
  gap: 9px;
  width: 106px;
  height: 92px;
  border: 0;
  border-radius: 8px;
  background: #fff;
}
.menu i { width: 55px; height: 9.5px; border-radius: 3px; background: #000; }
.logo { font: 300 40px/48px Lato, sans-serif; letter-spacing: .9px; color: #000; -webkit-text-stroke: .5px; }
.site { letter-spacing: 1.8px; color: #111; margin-left: -18px; }
.account { display: flex; justify-content: flex-end; align-items: center; gap: 66px; color: #007bff; }
.alert {
  position: relative;
  display: flex;
  align-items: center;
  justify-content: center;
  width: 55px;
  height: 55px;
  border-radius: 50%;
  background: #007bff;
  color: #fff;
}
.count {
  position: absolute;
  top: -4px;
  right: -5px;
  width: 24px;
  height: 24px;
  border-radius: 50%;
  background: rgba(255, 20, 40, .88);
  font-size: 14px;
  line-height: 24px;
  letter-spacing: 0;
  text-align: center;
}
.me { display: flex; align-items: center; gap: 9px; letter-spacing: 1.4px; }

/* map and chart */
.panels { display: flex; gap: 40px; padding-left: 20px; height: 414px; }
.map { position: relative; width: 1226px; height: 414px; overflow: hidden; }
.zoom {
  position: absolute;
  top: 12px;
  left: 20px;
  width: 68px;
  border: 4px solid rgba(0, 0, 0, .2);
  border-radius: 8px;
  background: #fff;
  background-clip: padding-box;
  font: bold 44px/73px "Liberation Mono", monospace;
  letter-spacing: 0;
  text-align: center;
  text-indent: 2px;
  color: #000;
}
.zoom span { display: block; height: 58px; }
.zoom span + span { height: 62px; border-top: 2px solid #ccc; }
.credit {
  position: absolute;
  right: 0;
  bottom: 0;
  padding: 0 10px;
  background: rgba(255, 255, 255, .7);
  font: 22px/32px "Liberation Sans", sans-serif;
  letter-spacing: 0;
  color: #333;
}
.credit a { color: #0078a8; }
.chart text { font: 24px "Liberation Sans", sans-serif; letter-spacing: 0; fill: #000; }
.chart .edge { font-weight: bold; }

/* toolbar */
.tools {
  display: grid;
  grid-template-columns: 214px 894px 1054px 350px;
  align-items: start;
  height: 184px;
  padding: 40px 0 0 20px;
  -webkit-text-stroke: .3px;
}
.total { margin: 0; width: 118px; }
.actions { display: flex; gap: 8px; }
.outline {
  display: flex;
  align-items: center;
  justify-content: center;
  width: 80px;
  height: 76px;
  border: 2px solid #007bff;
  border-radius: 8px;
  background: #fff;
  color: #007bff;
}
.outline.wide { width: 82px; }
.pages { display: flex; height: 84px; color: #000; }
.pages a { width: 83px; border: 2px solid #ddd; line-height: 81px; text-align: center; }
.pages .two { width: 82px; }
.pages .n { width: 86px; }
.pages .on { background: #ddd; }
.pages .first { width: 136px; }
.pages .prev { width: 195px; }
.pages .next { width: 138px; }
.pages .last { width: 132px; }
.perpage { display: flex; align-items: center; justify-content: space-between; height: 84px; letter-spacing: .8px; white-space: nowrap; }
.select {
  display: flex;
  align-items: center;
  justify-content: space-between;
  width: 121px;
  height: 76px;
  padding: 0 24px;
  border: 2px solid #ced4da;
  border-radius: 8px;
  color: #495057;
  letter-spacing: -1.4px;
}
.select svg { color: #343a40; }

/* visitors table */
.visitors { width: 2512px; margin-left: 20px; border-collapse: separate; border-spacing: 0; table-layout: fixed; }
.c1 { width: 94px; } .c2 { width: 146px; } .c3 { width: 258px; } .c4 { width: 240px; } .c5 { width: 210px; }
.c6 { width: 204px; } .c7 { width: 206px; } .c8 { width: 216px; } .c9 { width: 122px; } .c10 { width: 204px; }
.c11 { width: 94px; } .c12 { width: 82px; } .c13 { width: 86px; } .c14 { width: 80px; } .c15 { width: 82px; }
.c16 { width: 78px; } .c17 { width: 110px; }
.visitors th, .visitors td { border-left: 2px solid #dee2e6; }
.visitors th:last-child, .visitors td:last-child { border-right: 2px solid #dee2e6; }
.visitors th {
  height: 116px;
  padding: 24px 0;
  vertical-align: bottom;
  border-top: 2px solid #dee2e6;
  border-bottom: 4px solid #dee2e6;
}
.visitors td {
  height: 194px;
  padding: 25px 10px 21px 24px;
  vertical-align: top;
  border-bottom: 2px solid #dee2e6;
  -webkit-text-stroke: .3px;
}
.visitors td:has(.ic) { padding-left: 0; padding-right: 0; }
.visitors tbody tr:nth-child(odd) td { background: #f1f1f1; }
.ic { display: flex; align-items: center; justify-content: center; height: 48px; }
.sort { width: 18px; height: 32px; margin-left: 8px; }
.country { margin-top: 9px; }
.tag {
  display: block;
  width: 94px;
  height: 36px;
  margin-top: 9px;
  border-radius: 8px;
  background: #007bff;
  color: #fff;
  font-weight: bold;
  font-size: 26px;
  line-height: 35px;
  letter-spacing: .6px;
  text-align: center;
}
.add { display: flex; align-items: center; height: 36px; margin-top: 12px; font-size: 25.6px; letter-spacing: 0; -webkit-text-stroke: 0; }
.visitors td.num { font-size: 34px; letter-spacing: -.7px; }
.visitors td.mid { text-align: center; padding-left: 20px; padding-right: 20px; }
.visitors .tight { letter-spacing: -1.25px; }
.visitors td.xtight { letter-spacing: -1.8px; }
.visitors td.ip2 { letter-spacing: -.95px; }
.visitors td.ip3 { letter-spacing: -.5px; }
.visitors .plain { letter-spacing: .2px; }
.apple svg { margin-left: -8px; }
.green { color: #28a745; }
.yellow { color: #ffc107; }
.teal { color: #17a2b8; }
.visitors th.act { padding-left: 24px; vertical-align: top; }
.visitors td.act { padding-top: 24px; }
.go {
  display: flex;
  align-items: center;
  justify-content: center;
  width: 58px;
  height: 62px;
  border: 0;
  border-radius: 6px;
  background: #007bff;
  color: #fff;
}
.go.small { width: 52px; }

/* hand-drawn notes over the page */
.notes { position: absolute; left: 0; top: 0; pointer-events: none; font-family: "Open Sans", sans-serif; }
.n-locate { font-size: 57px; letter-spacing: .7px; }
.n-identify { font-size: 61px; letter-spacing: 1.2px; }
.n-download { font-size: 59px; letter-spacing: -.4px; }
.n-group { font-size: 64px; letter-spacing: 1.3px; }
.n-tag { font-size: 56px; letter-spacing: -1.5px; }
```
